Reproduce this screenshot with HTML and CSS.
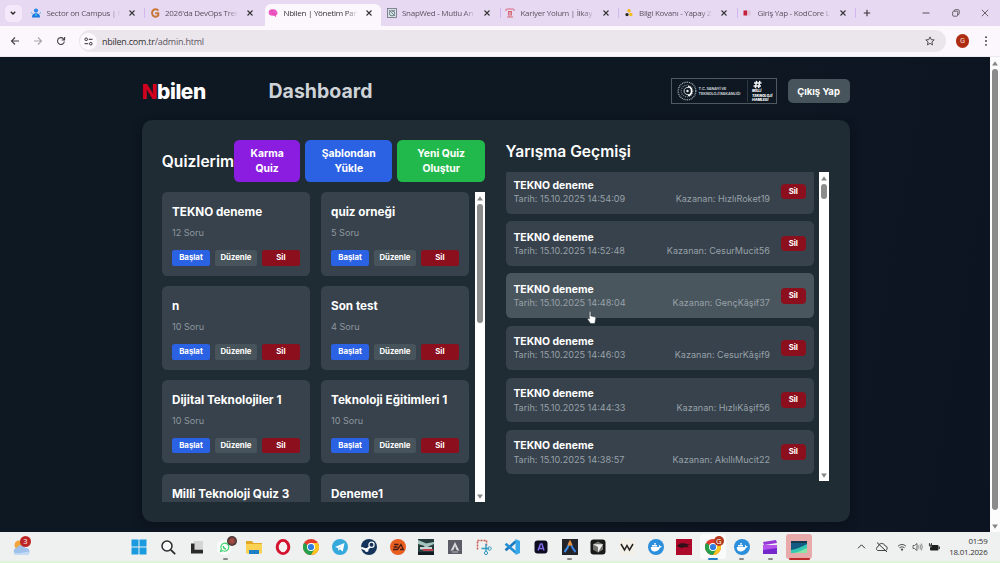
FILE: index.html
```html
<!DOCTYPE html>
<html lang="tr">
<head>
<meta charset="utf-8">
<title>Nbilen | Yönetim Paneli</title>
<link rel="stylesheet" href="styles.css">
</head>
<body>
<svg class="defs" width="0" height="0">
  <symbol id="close" viewBox="0 0 8 8"><path d="M1.500 1.500l5 5M6.500 1.500l-5 5" fill="none" stroke="currentColor" stroke-width="1.100"/></symbol>
  <symbol id="chrome" viewBox="0 0 16 16"><circle cx="8" cy="8" r="8" fill="#e33b2e"/><path d="M8 8L1.070 4A8 8 0 0 0 8 16l4-6z" fill="#27a04b"/><path d="M8 8l3.500 2L8 16A8 8 0 0 0 14.930 4H8z" fill="#fcc621"/><circle cx="8" cy="8" r="4" fill="#fff"/><circle cx="8" cy="8" r="3.100" fill="#2f7de1"/></symbol>
  <symbol id="docker" viewBox="0 0 16 16"><circle cx="8" cy="8" r="8" fill="#2b8fdc"/><path d="M2.800 8h8.100c.3-.7.2-1.500-.2-2.200.9.2 1.300.8 1.500 1.500.7-.1 1.200 0 1.600.3-.4.8-1 1.200-1.900 1.200C11 11.400 9 12.500 6.600 12.500 4 12.500 2.600 10.900 2.800 8zM4 6h5v1.500H4zM6 4.200h2v1.400H6z" fill="#fff"/></symbol>
  <symbol id="up" viewBox="0 0 6 5"><path d="M3 .3L5.900 4.500H.1z" fill="#858585"/></symbol>
  <symbol id="down" viewBox="0 0 6 5"><path d="M3 4.700L5.900 .5H.1z" fill="#858585"/></symbol>
</svg>

<div class="tabstrip">
  <div class="tabsearch"><svg width="8" height="8" viewBox="0 0 8 8"><path d="M1.800 2.800L4 5l2.200-2.200" fill="none" stroke="#222" stroke-width="1.300"/></svg></div>
  <div class="tab line">
    <svg class="fav" viewBox="0 0 10 10"><circle cx="5" cy="2.600" r="2.100" fill="#2589e8"/><path d="M1 9.500c0-3 1.500-4.300 4-4.300s4 1.300 4 4.300z" fill="#1976dc"/><path d="M0 4.500l1.600 1M10 4.500L8.400 5.500" stroke="#49b6ef"/><circle cx="5" cy="7" r="1" fill="#36c5ea"/></svg>
    <span class="tt">Sector on Campus | M</span><svg class="x"><use href="#close"/></svg></div>
  <div class="tab">
    <svg class="fav" viewBox="0 0 10 10"><path d="M8.300 2.700A3.500 3.700 0 1 0 8.300 7.300V5.200H5.200" fill="none" stroke="#c77836" stroke-width="2"/></svg>
    <span class="tt">2026'da DevOps Tren</span><svg class="x"><use href="#close"/></svg></div>
  <div class="tab active">
    <svg class="fav" viewBox="0 0 10 10"><path d="M.6 4.500C.8 2 2.500 1 4.500 1.200c2.500-.4 4.800 1.200 5 3.600.1 1.500-.4 2-1.300 2.200L8 9 6 7.700C3 8.300.6 7 .6 4.500z" fill="#ee58c0"/><path d="M2.500 3.500c1-1 2 0 3-.8M4 5.800c1 .6 2-.6 3.500 0" stroke="#c63aa0" stroke-width=".6" fill="none"/></svg>
    <span class="tt">Nbilen | Yönetim Pan</span><svg class="x"><use href="#close"/></svg></div>
  <div class="tab line">
    <svg class="fav" viewBox="0 0 10 10"><rect x=".5" y=".5" width="9" height="9" fill="#e3dfe9" stroke="#68707e" stroke-width=".8"/><circle cx="5" cy="5.200" r="2.700" fill="none" stroke="#4c8576" stroke-width=".9"/><path d="M2 2l6 6M5 4l3-2" stroke="#667084" stroke-width=".8"/></svg>
    <span class="tt">SnapWed - Mutlu An</span><svg class="x"><use href="#close"/></svg></div>
  <div class="tab line">
    <svg class="fav" viewBox="0 0 10 10"><path d="M1.500 1h7M1 3V1M9 3V1M2 9h6M5 4v5M3.500 3v4.500M6.500 3v4.500M3 3.500h4" fill="none" stroke="#d65b66" stroke-width=".9"/></svg>
    <span class="tt">Kariyer Yolum | İlkay</span><svg class="x"><use href="#close"/></svg></div>
  <div class="tab line">
    <svg class="fav" viewBox="0 0 10 10"><circle cx="5" cy="2.800" r="1.700" fill="#f3b517"/><circle cx="3" cy="6.600" r="1.600" fill="#222"/><circle cx="6.800" cy="6.500" r="1.800" fill="#f3bd18"/></svg>
    <span class="tt">Bilgi Kovanı - Yapay Z</span><svg class="x"><use href="#close"/></svg></div>
  <div class="tab line">
    <svg class="fav" viewBox="0 0 10 10"><rect x="1.500" y="2.500" width="3.700" height="5" fill="#c41e38"/><rect x="5.600" y="2.500" width="2.800" height="5" fill="#d9c4d8"/></svg>
    <span class="tt">Giriş Yap - KodCore L</span><svg class="x"><use href="#close"/></svg></div>
  <svg class="newtab" viewBox="0 0 8 8"><path d="M4 .8v6.400M.8 4h6.400" stroke="#333" stroke-width="1.100"/></svg>
  <div class="winbtns">
    <svg width="8" height="8" viewBox="0 0 8 8"><path d="M.5 4h7" stroke="#444" stroke-width=".9"/></svg>
    <svg width="8" height="8" viewBox="0 0 8 8"><rect x=".7" y="2.200" width="5" height="5" rx="1" fill="none" stroke="#444" stroke-width=".8"/><path d="M2.400 2V1.500Q2.400.7 3.200.7h3q1 0 1 1v3q0 .8-.8.8H6" fill="none" stroke="#444" stroke-width=".8"/></svg>
    <svg width="8" height="8" viewBox="0 0 8 8"><path d="M.8.800l6.400 6.400M7.200.8L.8 7.200" stroke="#444" stroke-width=".8"/></svg>
  </div>
</div>

<div class="toolbar">
  <svg class="nav" viewBox="0 0 10 10"><path d="M9 5H1.500M5 1.500L1.500 5 5 8.500" fill="none" stroke="#444" stroke-width="1.100"/></svg>
  <svg class="nav" viewBox="0 0 10 10"><path d="M1 5h7.500M5 1.500L8.500 5 5 8.500" fill="none" stroke="#aaa3ad" stroke-width="1.100"/></svg>
  <svg class="nav" viewBox="0 0 10 10"><path d="M8.300 5.500A3.400 3.400 0 1 1 7.400 2.700L8.500 3.800M8.600 1v3H5.600" fill="none" stroke="#444" stroke-width="1.100"/></svg>
  <div class="omnibox">
    <div class="site"><svg width="9" height="9" viewBox="0 0 9 9"><path d="M4.800 2.300h3.700M.5 6.700h3.700" stroke="#333" stroke-width="1"/><circle cx="2.200" cy="2.300" r="1.300" fill="none" stroke="#333" stroke-width="1"/><circle cx="6.800" cy="6.700" r="1.300" fill="none" stroke="#333" stroke-width="1"/></svg></div>
    <span class="url">nbilen.com.tr<i>/admin.html</i></span>
    <svg class="star" viewBox="0 0 10 10"><path d="M5 .9l1.200 2.700 3 .3-2.300 2 .7 3L5 7.300 2.400 8.900l.7-3L.8 3.900l3-.3z" fill="none" stroke="#444" stroke-width=".9"/></svg>
  </div>
  <div class="avatar">G</div>
  <svg class="dots" viewBox="0 0 4 10"><g fill="#333"><circle cx="2" cy="1.200" r=".9"/><circle cx="2" cy="5" r=".9"/><circle cx="2" cy="8.800" r=".9"/></g></svg>
</div>

<div class="viewport">
  <main class="page">
    <header class="top">
      <div class="brand"><b>N</b>bilen</div>
      <h1>Dashboard</h1>
      <div class="ministry">
        <svg width="20" height="20" viewBox="0 0 20 20"><circle cx="10" cy="10" r="8.800" fill="none" stroke="#9aa3a8" stroke-width="1.400" stroke-dasharray="1 .8"/><circle cx="10" cy="10" r="5.800" fill="none" stroke="#818c93" stroke-width="1.200" stroke-dasharray="1 1"/><path d="M11.500 6.500a3.600 3.600 0 1 0 0 7" fill="none" stroke="#c6cdd1" stroke-width="1"/><path d="M11 5.500a4.600 4.600 0 0 1 0 9" fill="none" stroke="#fff" stroke-width="1.700"/><circle cx="10.500" cy="10" r="1.200" fill="#e8edf0"/></svg>
        <div class="mtext">T.C. SANAYİ VE<br>TEKNOLOJİ BAKANLIĞI</div>
        <div class="mark">
          <svg width="9" height="9" viewBox="0 0 9 9"><path d="M3.600.8L2.400 8.200M6.800.8L5.600 8.200M1 3h7.500M.5 6H8" stroke="#f2f4f5" stroke-width="1.500" fill="none"/></svg>
          <span>MİLLİ</span><span>TEKNOLOJİ</span><span>HAMLESİ</span>
        </div>
      </div>
      <button class="logout">Çıkış Yap</button>
    </header>

    <section class="panel">
      <div class="col">
        <div class="colhead">
          <h2>Quizlerim</h2>
          <div class="actions">
            <button class="purple">Karma<br>Quiz</button>
            <button class="blue">Şablondan<br>Yükle</button>
            <button class="green">Yeni Quiz<br>Oluştur</button>
          </div>
        </div>
        <div class="list quizlist">
          <div class="grid">
            <article class="card"><h3>TEKNO deneme</h3><p>12 Soru</p><div class="row"><button class="blue">Başlat</button><button class="gray">Düzenle</button><button class="red">Sil</button></div></article>
            <article class="card"><h3>quiz orneği</h3><p>5 Soru</p><div class="row"><button class="blue">Başlat</button><button class="gray">Düzenle</button><button class="red">Sil</button></div></article>
            <article class="card"><h3>n</h3><p>10 Soru</p><div class="row"><button class="blue">Başlat</button><button class="gray">Düzenle</button><button class="red">Sil</button></div></article>
            <article class="card"><h3>Son test</h3><p>4 Soru</p><div class="row"><button class="blue">Başlat</button><button class="gray">Düzenle</button><button class="red">Sil</button></div></article>
            <article class="card"><h3>Dijital Teknolojiler 1</h3><p>10 Soru</p><div class="row"><button class="blue">Başlat</button><button class="gray">Düzenle</button><button class="red">Sil</button></div></article>
            <article class="card"><h3>Teknoloji Eğitimleri 1</h3><p>10 Soru</p><div class="row"><button class="blue">Başlat</button><button class="gray">Düzenle</button><button class="red">Sil</button></div></article>
            <article class="card"><h3>Milli Teknoloji Quiz 3</h3></article>
            <article class="card"><h3>Deneme1</h3></article>
          </div>
          <div class="bar"><svg><use href="#up"/></svg><i class="thumb quizthumb"></i><svg><use href="#down"/></svg></div>
        </div>
      </div>

      <div class="col">
        <h2 class="histhead">Yarışma Geçmişi</h2>
        <div class="list histlist">
          <div class="rows">
            <div class="item"><div class="info"><h4>TEKNO deneme</h4><p><span>Tarih: 15.10.2025 14:54:09</span><span>Kazanan: HızlıRoket19</span></p></div><button class="red">Sil</button></div>
            <div class="item"><div class="info"><h4>TEKNO deneme</h4><p><span>Tarih: 15.10.2025 14:52:48</span><span>Kazanan: CesurMucit56</span></p></div><button class="red">Sil</button></div>
            <div class="item hover"><div class="info"><h4>TEKNO deneme</h4><p><span>Tarih: 15.10.2025 14:48:04</span><span>Kazanan: GençKâşif37</span></p></div><button class="red">Sil</button></div>
            <div class="item"><div class="info"><h4>TEKNO deneme</h4><p><span>Tarih: 15.10.2025 14:46:03</span><span>Kazanan: CesurKâşif9</span></p></div><button class="red">Sil</button></div>
            <div class="item"><div class="info"><h4>TEKNO deneme</h4><p><span>Tarih: 15.10.2025 14:44:33</span><span>Kazanan: HızlıKâşif56</span></p></div><button class="red">Sil</button></div>
            <div class="item"><div class="info"><h4>TEKNO deneme</h4><p><span>Tarih: 15.10.2025 14:38:57</span><span>Kazanan: AkıllıMucit22</span></p></div><button class="red">Sil</button></div>
          </div>
          <div class="bar"><svg><use href="#up"/></svg><i class="thumb histthumb"></i><svg><use href="#down"/></svg></div>
        </div>
      </div>
    </section>
  </main>
  <div class="bar pagebar"><svg><use href="#up"/></svg><i class="thumb pagethumb"></i><svg><use href="#down"/></svg></div>
</div>

<footer class="taskbar">
  <div class="weather"><svg width="20" height="20" viewBox="0 0 20 20"><circle cx="7" cy="8" r="4.500" fill="#f2a63a"/><path d="M5 18a3.700 3.700 0 0 1-.3-7.300A5 5 0 0 1 13.500 11 3.600 3.600 0 0 1 15 18z" fill="#9fc1ea"/><path d="M5 18a3 3 0 0 1-3-2.500c4 1.500 9 0 15.500-1A3.500 3.500 0 0 1 15 18z" fill="#c4daf5"/></svg><span class="badge">3</span></div>
  <nav class="apps">
    <a><svg viewBox="0 0 16 16"><path d="M.5.500h7v7h-7zM8.500.5h7v7h-7zM.5 8.500h7v7h-7zM8.500 8.500h7v7h-7z" fill="#1a9be0"/></svg></a>
    <a><svg viewBox="0 0 16 16"><circle cx="7" cy="7" r="5" fill="#f8f9fa" stroke="#2b2b2b" stroke-width="1.500"/><path d="M10.800 10.800l4.400 4.400" stroke="#2b2b2b" stroke-width="1.800"/></svg></a>
    <a><svg viewBox="0 0 16 16"><path d="M5 2h9v9H5z" fill="#d5d5d5"/><path d="M2 4.500h3.500v6.300H14v3.700H2z" fill="#2a2a2a"/></svg></a>
    <a class="run"><svg viewBox="0 0 16 16"><circle cx="7" cy="8.500" r="7.500" fill="#fafcfa"/><path d="M3.500 12.500l.8-2.500a4 4 0 1 1 1.500 1.600z" fill="none" stroke="#32cf66" stroke-width="1.100"/><path d="M6 7q.5 2.500 2.800 3" fill="none" stroke="#32cf66" stroke-width="1.300"/></svg><span class="photo"></span></a>
    <a><svg viewBox="0 0 16 16"><path d="M0 2h6l1.500 2H16v4H0z" fill="#e2a928"/><path d="M0 5h16v9.500H0z" fill="#fbd253"/><path d="M3 11h10v4H3z" fill="#1f7fc4"/></svg></a>
    <a><svg viewBox="0 0 16 16"><ellipse cx="8" cy="8" rx="5.800" ry="6.500" fill="none" stroke="#d4142e" stroke-width="3"/><ellipse cx="8" cy="8" rx="3.300" ry="5.200" fill="#f5f2f2"/></svg></a>
    <a><svg viewBox="0 0 16 16"><use href="#chrome"/></svg></a>
    <a><svg viewBox="0 0 16 16"><circle cx="8" cy="8" r="8" fill="#35a9dc"/><path d="M3 8l9.500-4-1.700 8.500-3-2.200-1.500 1.500-.3-2.800z" fill="#fff"/><path d="M6 9l5-3.500-4 4.200" fill="#bcdff0"/></svg></a>
    <a><svg viewBox="0 0 16 16"><circle cx="8" cy="8" r="8" fill="#15345c"/><path d="M.2 8.800l5 2 4-3" fill="none" stroke="#fff" stroke-width="2"/><circle cx="10.500" cy="5.800" r="2.600" fill="#15345c" stroke="#fff" stroke-width="1.200"/><circle cx="5.700" cy="11" r="1.900" fill="#fff"/></svg></a>
    <a><svg viewBox="0 0 16 16"><circle cx="8" cy="8" r="8" fill="#e85f20"/><path d="M4.200 5.500h4.300M3.600 8h4M3 10.500h4.500L11 5.500l2.300 5H10" fill="none" stroke="#451b15" stroke-width="1.300"/></svg></a>
    <a><svg viewBox="0 0 16 16"><path d="M0 0h16v16H0z" fill="#263d3d"/><path d="M0 1l12 5-2 2-10-3zM5 5l11-2v2L7 9z" fill="#a5c6be"/><path d="M2 8h12v2.500H2z" fill="#c9d4d2"/><path d="M5 10h10v2H5z" fill="#bd3f50"/><path d="M0 13h16v3H0z" fill="#101c22"/></svg></a>
    <a><svg viewBox="0 0 16 16"><path d="M1 1h14v14H1z" fill="#5c5c66"/><path d="M8 3L3.500 12l3-1L8 7l1.500 4 3 1z" fill="#d8d8df"/><path d="M5 13h6" stroke="#b4b4bd"/></svg></a>
    <a><svg viewBox="0 0 16 16"><path d="M1.500 10.500v-9h9v6" fill="none" stroke="#c75a4e" stroke-width="1.500" stroke-dasharray="2 1"/><path d="M10 5v7M5.500 9.500H13" stroke="#329bc0" stroke-width="1.400"/><circle cx="13.500" cy="9.500" r="1.700" fill="none" stroke="#329bc0"/><circle cx="10" cy="14" r="1.600" fill="none" stroke="#329bc0"/></svg></a>
    <a><svg viewBox="0 0 16 16"><path d="M12 2.300L1.500 11.300" stroke="#1c78bf" stroke-width="2.700"/><path d="M12 13.700L1.500 4.700" stroke="#2590d6" stroke-width="2.700"/><path d="M11.500 0L16 2v12l-4.500 2z" fill="#36a8ea"/></svg></a>
    <a><svg viewBox="0 0 16 16"><rect x="1.500" y="1.500" width="13" height="13" rx="3" fill="#0d0d20"/><path d="M5 11.500L7.500 5h1.500l2 6.500M6 9.500h4.500" fill="none" stroke="#7e67e8" stroke-width="1.500"/></svg></a>
    <a class="run"><svg viewBox="0 0 16 16"><path d="M0 0h16v16H0z" fill="#23242a"/><path d="M2.500 13Q6 9 8 3" fill="none" stroke="#3f91ee" stroke-width="2"/><path d="M8 3q2 6 5.500 10" fill="none" stroke="#3d83e3" stroke-width="2"/><path d="M6.500 6.500L8 3l1.500 3.500" fill="none" stroke="#ec8f38" stroke-width="2"/></svg></a>
    <a><svg viewBox="0 0 16 16"><rect x=".5" y=".5" width="15" height="15" rx="3" fill="#191917"/><path d="M8 2.500l5 2.800v5.500l-5 2.800-5-2.800V5.300z" fill="#73736e"/><path d="M3 5.300h10l-5 8.200V8z" fill="#eee"/></svg></a>
    <a><svg viewBox="0 0 16 16"><rect width="16" height="16" rx="2" fill="#f3f0e7"/><path d="M2 5l3.500 6L8 6.500 10.500 11 14 5" fill="none" stroke="#222" stroke-width="1.500"/></svg></a>
    <a><svg viewBox="0 0 16 16"><use href="#docker"/></svg></a>
    <a><svg viewBox="0 0 16 16"><path d="M0 0h16v16H0z" fill="#ad0a2b"/><path d="M1 7q3-4 8-2.500l5 1-3 1 2 2-4-.5-3 1-2-.5z" fill="#32101b"/></svg></a>
    <a class="on"><svg viewBox="0 0 16 16"><use href="#chrome"/></svg><span class="badge g">G</span></a>
    <a class="run"><svg viewBox="0 0 16 16"><use href="#docker"/></svg></a>
    <a class="run"><svg viewBox="0 0 16 16"><path d="M1 3l13-2 1 3-13 2z" fill="#9437d6"/><path d="M1 6h14v9H1z" fill="#7527cc"/><path d="M1 6h14v3L1 11z" fill="#b454ed"/></svg></a>
    <a class="rec"><svg viewBox="0 0 16 16"><path d="M0 2h16v12H0z" fill="#135b83"/><path d="M0 11Q7 10 16 5v9H0z" fill="#35c8b2"/><path d="M3 14q5-1 13-5v5z" fill="#8be4a7"/><path d="M0 2h16v2H0z" fill="#143953"/></svg></a>
  </nav>
  <div class="tray">
    <svg width="9" height="9" viewBox="0 0 9 9"><path d="M1 6.300L4.500 2.800 8 6.300" fill="none" stroke="#333"/></svg>
    <svg class="eye" width="12" height="12" viewBox="0 0 12 12"><path d="M1.500 9.500a2.200 2.200 0 0 1 .7-4A3.500 3.500 0 0 1 9 4.800a2.400 2.400 0 0 1 .5 4.700z" fill="none" stroke="#444" stroke-width="1"/><path d="M1 1.500l10 9.500" stroke="#333"/></svg>
    <svg width="10" height="10" viewBox="0 0 10 10"><path d="M1 4.200q4-3.500 8 0M2.400 5.800q2.600-2.200 5.200 0" fill="none" stroke="#444" stroke-width=".9"/><circle cx="5" cy="7.600" r="1.100" fill="#444"/></svg>
    <svg class="spk" width="11" height="10" viewBox="0 0 11 10"><path d="M1 3.500h1.500L5 1.500v7L2.500 6.500H1z" fill="none" stroke="#444" stroke-width=".8"/><path d="M6.500 3.500q1 1.500 0 3M8 2.500q1.800 2.500 0 5M9.300 1.500q2.200 3.500 0 7" fill="none" stroke="#666" stroke-width=".7"/></svg>
    <svg class="bat" width="12" height="10" viewBox="0 0 12 10"><rect x="2" y="3" width="8.500" height="5.500" rx="1" fill="#1f1f1f"/><path d="M11.300 4.500v2.500" stroke="#222"/><path d="M1.500 1v2M3.500 1v2M.8 3h3.400v2L2.500 6.300" stroke="#222" stroke-width=".8" fill="#666"/></svg>
    <div class="clock">01:59<br>18.01.2026</div>
  </div>
</footer>
<svg class="cursor" width="10" height="13" viewBox="0 0 10 13"><path d="M2.300 1q0-.7.700-.7t.8.700v4l3.800.8q1.300.3 1.200 1.600L8.300 10l-.5 2.500H3.500L.7 8.500q-.5-.9.300-1.200l1.300.7z" fill="#fff" stroke="#263038" stroke-width=".5"/></svg>
</body>
</html>
```
FILE: styles.css
```css
* { box-sizing: border-box; }
html { font-size: 10.4px; }
body {
  margin: 0; width: 1000px; height: 563px; overflow: hidden;
  display: flex; flex-direction: column; position: relative;
  font-family: Inter, sans-serif; background: #0e1822;
}
.defs { position: absolute; }
h1, h2, h3, h4, p { margin: 0; }
button { border: 0; padding: 0; margin: 0; font: inherit; color: #fff; font-weight: 700; }

/* browser chrome */
.tabstrip {
  height: 26px; flex: none; display: flex; align-items: center;
  background: #e8d9f3; font-family: "Open Sans", "Noto Sans", sans-serif; color: #5b5360;
}
.tabsearch {
  width: 17px; height: 17px; margin: 0 5px 0 4.5px; border-radius: 5px; background: #f4e9fa;
  display: flex; align-items: center; justify-content: center;
}
.tab {
  width: 118.5px; height: 26px; flex: none; display: flex; align-items: center;
  padding-left: 4.5px; position: relative; color: #5b5360;
}
.tab.line::after {
  content: ""; position: absolute; right: 0; top: 8px; width: 1px; height: 10px; background: #d2b6ee;
}
.tab.active::before {
  content: ""; position: absolute; inset: 4px 1px 0 1px; background: #fcf6fd; border-radius: 6px 6px 0 0; z-index: 0;
}
.tab.active { color: #333; }
.fav { width: 10px; height: 10px; flex: none; margin-right: 5.5px; position: relative; }
.tt {
  width: 76px; height: 14px; line-height: 14px; white-space: nowrap; position: relative;
  font-size: 8px; letter-spacing: -.28px;
  -webkit-mask-image: linear-gradient(90deg, #000 82%, transparent 97%);
  mask-image: linear-gradient(90deg, #000 82%, transparent 97%);
}
.x { width: 8px; height: 8px; margin-left: 5px; color: #333; position: relative; }
.newtab { width: 8px; height: 8px; margin-left: 6.500px; }
.winbtns { margin-left: auto; padding-right: 11px; display: flex; gap: 21.500px; }
.toolbar {
  height: 31px; flex: none; display: flex; align-items: center; background: #fcf6fd;
  padding: 0 12px 0 9.500px; border-bottom: 1px solid #eee9f0;
}
.nav { width: 10px; height: 10px; margin-right: 13.300px; }
.omnibox {
  width: 867px; height: 22px; border-radius: 11px; background: #ebe5ec; display: flex; align-items: center;
  padding: 0 11px 0 1.500px; margin-left: -.5px;
}
.site { width: 17px; height: 17px; border-radius: 50%; background: #fcf8fd; display: flex; align-items: center; justify-content: center; }
.url { font: 9px "Open Sans", "Noto Sans", sans-serif; letter-spacing: -.23px; color: #333; margin-left: 4.500px; }
.url i { font-style: normal; color: #5c565f; }
.star { width: 10px; height: 10px; margin-left: auto; }
.avatar {
  width: 13.500px; height: 13.500px; margin-left: 10px; border-radius: 50%; background: #ad2c12; color: #f5dcd5;
  font: 7.500px/13.500px Roboto, sans-serif; text-align: center;
}
.dots { width: 4px; height: 10px; margin-left: auto; }

/* page */
.viewport { height: 475px; flex: none; display: flex; background: linear-gradient(100deg, #0e1822 60%, #0c1421); }
.page { width: 990px; padding: 20.600px 140.500px 0 141.500px; }
.top { height: 27px; display: flex; align-items: center; }
.brand { width: 127px; font-size: 20.800px; font-weight: 800; color: #fff; letter-spacing: -.4px; }
.brand b { color: #d2001f; font-weight: 800; }
.top h1 { font-size: 19.500px; font-weight: 700; color: #ced3d8; }
.ministry {
  width: 106px; height: 26px; margin-left: auto; padding: 0 3px 0 4.500px; border: 1px solid #4e5960;
  display: flex; align-items: center;
}
.ministry > svg { flex: none; }
.mtext { width: 48px; flex: none; margin-left: 2px; font-size: 3.800px; line-height: 5px; font-weight: 700; color: #c9cfd2; white-space: nowrap; letter-spacing: -.1px; }
.mark { width: 28px; height: 22px; border-left: 1px solid #2d3941; padding-left: 4.500px; color: #f2f4f5; display: flex; flex-direction: column; align-items: flex-start; }
.mark svg { flex: none; margin-left: 1px; }
.mark span { font-size: 3.600px; line-height: 4.400px; font-weight: 900; font-style: italic; letter-spacing: -.1px; }
.logout { width: 62px; height: 23.500px; margin-left: 10.400px; border-radius: 5px; background: #48545b; font-size: 9.500px; }
.panel {
  height: 402.400px; margin-top: 15px; padding: 20.800px 20.300px; border-radius: 10.400px; background: #202c34;
  display: grid; grid-template-columns: 323px 323px; gap: 20.800px; box-shadow: 0 2px 8px #0a111a;
}
.col { min-width: 0; }
.colhead { height: 41.600px; display: flex; align-items: center; justify-content: space-between; }
h2 { font-size: 15.600px; line-height: 21px; font-weight: 600; color: #fff; }
.actions { display: flex; gap: 5.200px; }
.actions button { height: 41.600px; padding-top: .4px; border-radius: 5.200px; font-size: 10.400px; line-height: 15.600px; }
.actions .purple { width: 66px; }
.actions .blue { width: 87px; }
.actions .green { width: 87.500px; }
.purple { background: #8a1de0; }
.blue { background: #2b61e3; }
.green { background: #22b94c; }
.gray { background: #48545b; }
.red { background: #8b0f1c; }
.list { display: flex; justify-content: space-between; overflow: hidden; }
.quizlist { height: 309.500px; margin-top: 10.400px; }
.grid { width: 307.700px; display: grid; grid-template-columns: 1fr 1fr; gap: 10.400px; align-content: start; }
.card { height: 83.400px; padding: 11px 10.200px 10.400px; border-radius: 5.200px; background: #37424c; }
.card h3 { font-size: 11.700px; line-height: 18.200px; font-weight: 700; color: #fff; white-space: nowrap; }
.card p { margin-top: 4.700px; font-size: 9.100px; line-height: 13.600px; color: #8e979f; }
.card .row { display: grid; grid-template-columns: 38px 41.500px 38px; gap: 5.200px; margin-top: 10.300px; }
.row button, .item button { height: 15.600px; line-height: 15.600px; border-radius: 2.600px; font-size: 7.800px; }
.histhead { padding-top: 1.200px; line-height: 20px; }
.histlist { height: 309.500px; margin-top: 10.100px; }
.rows { width: 308px; margin-top: -2.400px; display: flex; flex-direction: column; gap: 7.800px; }
.item { height: 44.300px; flex: none; padding: 8px 7.800px 7.800px; border-radius: 5.200px; background: #37424c; display: flex; align-items: center; }
.item.hover { background: #4a565e; }
.info { flex: 1; padding-right: 10.800px; }
.item h4 { font-size: 10.400px; line-height: 15.600px; font-weight: 700; color: #fff; padding-top: .3px; }
.item p { display: flex; justify-content: space-between; font-size: 9.100px; line-height: 12.700px; color: #98a1a8; white-space: nowrap; }
.item button { width: 25px; border-radius: 4px; }

/* scrollbars */
.bar { width: 10px; background: #fff; display: flex; flex-direction: column; align-items: center; padding: 4px 0 3px; }
.bar svg { width: 6px; height: 5px; flex: none; }
.bar svg:last-child { margin-top: auto; }
.thumb { width: 6px; flex: none; margin-top: 3px; border-radius: 3px; background: #8b8b8b; }
.quizthumb { height: 119px; }
.histthumb { height: 15px; }
.pagebar { background: #fcfcfc; }
.pagethumb { height: 441px; margin-top: 3px; }

/* taskbar */
.taskbar {
  height: 31px; flex: none; background: #eff0f0; border-bottom: 2px solid #dcf6d7;
  display: flex; align-items: center; position: relative;
}
.weather { width: 125px; height: 20px; padding-left: 12px; position: relative; }
.badge {
  position: absolute; left: 20px; top: -1px; width: 11px; height: 11px; border-radius: 50%;
  background: #bd2525; color: #fff; font: 7.500px/11px "Open Sans", sans-serif; text-align: center;
}
.apps { display: flex; }
.apps a { width: 28.700px; height: 29px; display: flex; align-items: center; justify-content: center; position: relative; }
.apps svg { width: 16px; height: 16px; position: relative; }
.apps a.run::after {
  content: ""; position: absolute; left: 12px; bottom: 1px; width: 5px; height: 2px; border-radius: 1px; background: #888;
}
.apps a.on::before, .apps a.rec::before { content: ""; position: absolute; inset: 2px 1.500px; border-radius: 3px; background: #fafafa; }
.apps a.rec::before { background: #e7a9a9; }
.apps a.on::after, .apps a.rec::after {
  content: ""; position: absolute; left: 9px; bottom: 1px; width: 10px; height: 2px; border-radius: 1px; background: #247fc9;
}
.apps a.rec::after { left: 4px; width: 21px; background: #c02a2a; }
.photo { position: absolute; left: 16px; top: 4px; width: 10px; height: 10px; border-radius: 50%; background: radial-gradient(#a54a43 25%, #4b3a38 60%); }
.badge.g { left: 15px; top: 4px; width: 10px; height: 10px; line-height: 10px; background: #b53a1e; }
.tray { margin-left: auto; padding-right: 12.500px; display: flex; align-items: center; }
.eye { margin-left: 10.500px; }
.eye + svg { margin-left: 9px; }
.spk { margin-left: 5px; }
.bat { margin-left: 5px; }
.clock { width: 47.500px; text-align: right; font: 7.900px/10.500px "Open Sans", "Noto Sans", sans-serif; color: #333; white-space: nowrap; letter-spacing: -.2px; padding-top: .6px; }
.cursor { position: absolute; left: 587px; top: 311px; }
```
